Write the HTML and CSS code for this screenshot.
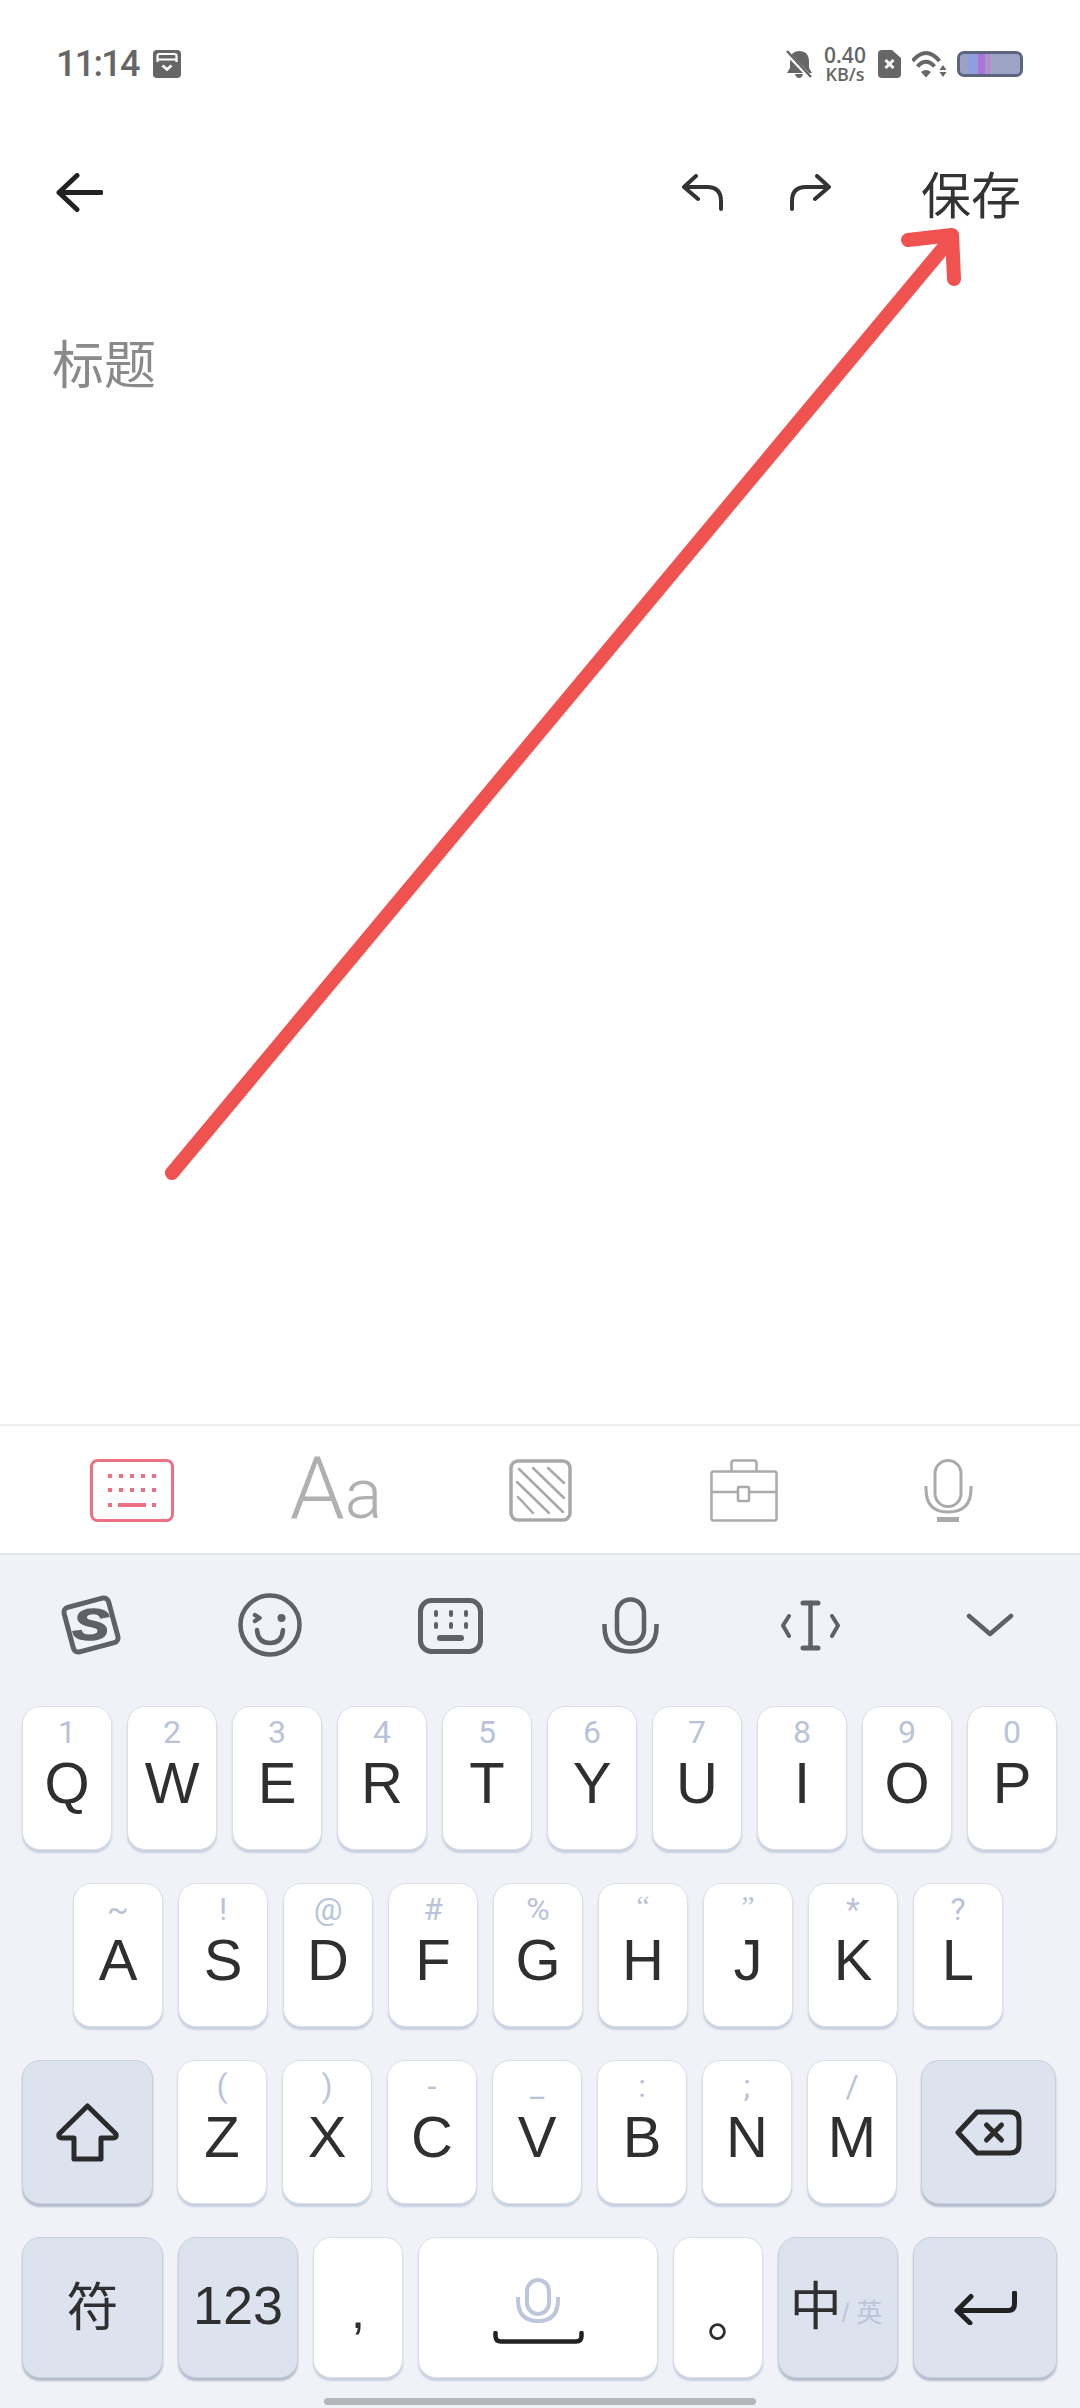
FILE: index.html
```html
<!DOCTYPE html>
<html lang="zh-CN">
  <head>
    <meta charset="UTF-8" />
    <meta name="viewport" content="width=device-width, initial-scale=1.0" />
    <title>新建笔记</title>
    <link rel="stylesheet" href="styles.css">
  </head>
  <body>
    <div class="phone">
      <div class="status">
        <span class="time">11:14</span>
        <svg class="ic-cal" viewBox="0 0 28 28"><rect width="28" height="28" rx="4" fill="#666"/><path d="M4.500 12V6Q4.500 4 6.500 4H21.500Q23.500 4 23.500 6V12M4.500 9.500H23.500" fill="none" stroke="#fff" stroke-width="2.200"/><path d="M9.500 15.500L14 19.500 18.500 15.500" fill="none" stroke="#fff" stroke-width="2.800"/></svg>
        <div class="status-right">
          <svg class="ic-bell" viewBox="0 0 26 28"><path d="M13 1Q23 1 23 12V18L26 23H1L4 18V12Q4 1 13 1Z" fill="#666"/><path d="M9 24H17Q16 28 13 28 10 28 9 24Z" fill="#666"/><path d="M0 2L24 27" stroke="#fff" stroke-width="4.500"/><path d="M1 1L25 27" stroke="#666" stroke-width="2.500"/></svg>
          <div class="speed"><span class="speed-num">0.40</span><span class="speed-unit">KB/s</span></div>
          <svg class="ic-sim" viewBox="0 0 23 28"><path d="M4 0H14L23 8V24Q23 28 19 28H4Q0 28 0 24V4Q0 0 4 0Z" fill="#666"/><path d="M7.500 10L15.500 18M15.500 10L7.500 18" stroke="#fff" stroke-width="3"/></svg>
          <svg class="ic-wifi" viewBox="0 0 35 27"><g fill="none" stroke="#666" stroke-width="4"><path d="M0.500 10Q14 -6 27.500 10"/><path d="M5.500 15.500Q14 6 22.500 15.500"/></g><path d="M9 21Q14 17 19 21L14 26.500Z" fill="#666"/><path d="M31 14L34.500 19H27.500ZM27.500 21H34.500L31 26Z" fill="#666"/></svg>
          <div class="battery"><span class="bat-stripe s1"></span><span class="bat-stripe s2"></span><span class="bat-stripe s3"></span></div>
        </div>
      </div>

      <div class="nav">
        <svg class="ic-back" viewBox="0 0 47 39"><path d="M3 19.500H45M21 2.500L3 19.500 21 36.500" fill="none" stroke="#222" stroke-width="5" stroke-linecap="round" stroke-linejoin="round"/></svg>
        <div class="nav-right">
          <svg class="ic-undo" viewBox="0 0 41 37"><path d="M14 2L2 13 16 25M2 13H25Q39 13 39 27V35" fill="none" stroke="#333" stroke-width="4" stroke-linecap="round" stroke-linejoin="round"/></svg>
          <svg class="ic-undo ic-redo" viewBox="0 0 41 37"><path d="M14 2L2 13 16 25M2 13H25Q39 13 39 27V35" fill="none" stroke="#333" stroke-width="4" stroke-linecap="round" stroke-linejoin="round"/></svg>
          <span class="save">保存</span>
        </div>
      </div>

      <div class="editor">
        <p class="title">标题</p>
      </div>

      <div class="tools">
        <svg class="tool" width="84" height="63" viewBox="0 0 84 63"><rect x="1.500" y="1.500" width="81" height="60" rx="6" fill="none" stroke="#ee7080" stroke-width="3"/><g fill="#ee7080"><rect x="18" y="15" width="4" height="4"/><rect x="29" y="15" width="4" height="4"/><rect x="40" y="15" width="4" height="4"/><rect x="51" y="15" width="4" height="4"/><rect x="62" y="15" width="4" height="4"/><rect x="18" y="29" width="4" height="4"/><rect x="29" y="29" width="4" height="4"/><rect x="40" y="29" width="4" height="4"/><rect x="51" y="29" width="4" height="4"/><rect x="62" y="29" width="4" height="4"/><rect x="18" y="44" width="4" height="4"/><rect x="28" y="44" width="28" height="4"/><rect x="62" y="44" width="4" height="4"/></g></svg>
        <span class="tool tool-aa">A<span class="tool-aa-small">a</span></span>
        <svg class="tool" width="63" height="63" viewBox="0 0 63 63"><path d="M24 9L55 39M10 10L54 53M8 23L40 54M9 38L24 54M39 9L55 24" fill="none" stroke="#a8a8a8" stroke-width="2.500" stroke-linecap="round"/><rect x="2" y="2" width="59" height="59" rx="7" fill="none" stroke="#a8a8a8" stroke-width="3.500"/></svg>
        <svg class="tool" width="68" height="63" viewBox="0 0 68 63"><g fill="none" stroke="#aaa" stroke-width="2.500"><rect x="1.500" y="12.500" width="65" height="49" rx="2"/><path d="M21.500 12V4Q21.500 1.500 24 1.500H44Q46.500 1.500 46.500 4V12M1.500 33H28M39 33H66.500"/><rect x="28" y="28" width="11" height="14" rx="1"/></g></svg>
        <svg class="tool" width="49" height="63" viewBox="0 0 49 63"><g fill="none" stroke="#aaa" stroke-width="3"><rect x="11" y="1.500" width="26" height="46" rx="13"/><path d="M2 27V30Q2 53 24 53 47 53 47 30V27"/></g><rect x="13" y="58" width="22" height="5" fill="#aaa"/></svg>
      </div>

      <div class="keyboard">
        <div class="kb-icons">
          <svg width="67" height="64" viewBox="0 0 67 64"><g transform="rotate(-15 34 32)"><rect x="11" y="9" width="46" height="46" rx="5" fill="none" stroke="#5f6166" stroke-width="5"/></g><text x="27" y="47" text-anchor="middle" transform="scale(1.25 1)" class="logo-s">S</text></svg>
          <svg width="64" height="64" viewBox="0 0 64 64"><g fill="none" stroke="#5f6166" stroke-width="4.500" stroke-linecap="round" stroke-linejoin="round"><circle cx="32" cy="32" r="29.500"/><path d="M17 22L21.500 25 17 28"/><path d="M19 37Q20 50 32 50 44 50 45 37"/></g><circle cx="43.500" cy="25" r="4" fill="#5f6166"/></svg>
          <svg width="65" height="57" viewBox="0 0 65 57"><rect x="2.500" y="3.500" width="60" height="51" rx="11" fill="none" stroke="#5f6166" stroke-width="5"/><g fill="#5f6166"><rect x="16" y="13" width="4" height="7" rx="2"/><rect x="31" y="13" width="4" height="7" rx="2"/><rect x="46" y="13" width="4" height="7" rx="2"/><rect x="16" y="25" width="4" height="7" rx="2"/><rect x="31" y="25" width="4" height="7" rx="2"/><rect x="46" y="25" width="4" height="7" rx="2"/><rect x="19" y="38" width="27" height="6" rx="3"/></g></svg>
          <svg width="57" height="57" viewBox="0 0 57 57"><g fill="none" stroke="#5f6166" stroke-width="4.500"><rect x="15" y="2.500" width="27" height="44" rx="13.500"/><path d="M2.500 27V30Q2.500 54.500 28.500 54.500 54.500 54.500 54.500 30V27"/></g></svg>
          <svg width="59" height="51" viewBox="0 0 59 51"><g fill="none" stroke="#5f6166" stroke-width="4" stroke-linecap="round" stroke-linejoin="round"><path d="M8 16L2 25.500 8 36M51 16L57 25.500 51 36"/><path d="M29.500 3V48" stroke-width="4.500"/><path d="M22 3H37M22 48H37" stroke-width="5"/></g></svg>
          <svg width="48" height="24" viewBox="0 0 48 24"><path d="M3 3L24 21 45 3" fill="none" stroke="#5f6166" stroke-width="4.500" stroke-linecap="round" stroke-linejoin="round"/></svg>
        </div>

        <div class="kb-rows">
          <div class="row">
            <div class="key"><span class="hint">1</span><span class="cap">Q</span></div>
            <div class="key"><span class="hint">2</span><span class="cap">W</span></div>
            <div class="key"><span class="hint">3</span><span class="cap">E</span></div>
            <div class="key"><span class="hint">4</span><span class="cap">R</span></div>
            <div class="key"><span class="hint">5</span><span class="cap">T</span></div>
            <div class="key"><span class="hint">6</span><span class="cap">Y</span></div>
            <div class="key"><span class="hint">7</span><span class="cap">U</span></div>
            <div class="key"><span class="hint">8</span><span class="cap">I</span></div>
            <div class="key"><span class="hint">9</span><span class="cap">O</span></div>
            <div class="key"><span class="hint">0</span><span class="cap">P</span></div>
          </div>
          <div class="row row-home">
            <div class="key"><span class="hint">~</span><span class="cap">A</span></div>
            <div class="key"><span class="hint">!</span><span class="cap">S</span></div>
            <div class="key"><span class="hint">@</span><span class="cap">D</span></div>
            <div class="key"><span class="hint">#</span><span class="cap">F</span></div>
            <div class="key"><span class="hint">%</span><span class="cap">G</span></div>
            <div class="key"><span class="hint hint-quote">“</span><span class="cap">H</span></div>
            <div class="key"><span class="hint hint-quote">”</span><span class="cap">J</span></div>
            <div class="key"><span class="hint">*</span><span class="cap">K</span></div>
            <div class="key"><span class="hint">?</span><span class="cap">L</span></div>
          </div>
          <div class="row row-shift">
            <div class="key key-fn key-shift">
              <svg width="63" height="59" viewBox="0 0 63 59"><path d="M31.500 3L60 31Q61 35 57 35H45V56H18V35H6Q2 35 3 31Z" fill="none" stroke="#2b2b2b" stroke-width="5" stroke-linejoin="round"/></svg>
            </div>
            <div class="row-group">
              <div class="key"><span class="hint">(</span><span class="cap">Z</span></div>
              <div class="key"><span class="hint">)</span><span class="cap">X</span></div>
              <div class="key"><span class="hint">-</span><span class="cap">C</span></div>
              <div class="key"><span class="hint">_</span><span class="cap">V</span></div>
              <div class="key"><span class="hint">:</span><span class="cap">B</span></div>
              <div class="key"><span class="hint">;</span><span class="cap">N</span></div>
              <div class="key"><span class="hint">/</span><span class="cap">M</span></div>
            </div>
            <div class="key key-fn key-del">
              <svg width="67" height="47" viewBox="0 0 67 47"><path d="M22 3H55Q64 3 64 12V35Q64 44 55 44H22L3 23.500Z" fill="none" stroke="#2b2b2b" stroke-width="5" stroke-linejoin="round"/><path d="M31.500 16L46.500 31M46.500 16L31.500 31" stroke="#2b2b2b" stroke-width="5" stroke-linecap="round"/></svg>
            </div>
          </div>
          <div class="row row-bottom">
            <div class="key key-fn key-sym">符</div>
            <div class="key key-fn key-num">123</div>
            <div class="key key-punct">,</div>
            <div class="key key-space">
              <svg width="44" height="45" viewBox="0 0 44 45"><g fill="none" stroke="#bcc7dc" stroke-width="4"><rect x="11" y="2" width="22" height="34" rx="11"/><path d="M2 19V22Q2 43 22 43 42 43 42 22V19"/></g></svg>
              <svg class="space-bar" width="91" height="13" viewBox="0 0 91 13"><path d="M2.500 2V5Q2.500 10.500 8 10.500H83Q88.500 10.500 88.500 5V2" fill="none" stroke="#222" stroke-width="4.500" stroke-linecap="round"/></svg>
            </div>
            <div class="key key-punct key-period"><span class="period">。</span></div>
            <div class="key key-fn key-lang"><span class="lang-zh">中</span><span class="lang-en">/ 英</span></div>
            <div class="key key-fn key-enter">
              <svg width="63" height="34" viewBox="0 0 63 34"><path d="M60.500 2V13Q60.500 19.500 54 19.500H4M17 5.500L3 19.500 16 32" fill="none" stroke="#222" stroke-width="5" stroke-linecap="round" stroke-linejoin="round"/></svg>
            </div>
          </div>
        </div>
        <div class="home-bar"></div>
      </div>

      <svg class="pointer" width="1080" height="2408" viewBox="0 0 1080 2408"><path d="M172 1173L945 246M908 240L952 235 954 279" fill="none" stroke="#f0524f" stroke-width="14" stroke-linecap="round" stroke-linejoin="round"/></svg>
    </div>
  </body>
</html>
```
FILE: styles.css
```css
* {
  box-sizing: border-box;
}

body {
  margin: 0;
  background: #fff;
  font-family: "Liberation Sans", "Noto Sans CJK SC", sans-serif;
}

.phone {
  position: relative;
  width: 1080px;
  height: 2408px;
  display: flex;
  flex-direction: column;
  overflow: hidden;
}

/* status bar */
.status {
  height: 128px;
  padding: 0 57px 0 56px;
  display: flex;
  align-items: center;
}

.time {
  width: 97px;
  font-family: Roboto, sans-serif;
  font-weight: 500;
  font-size: 36px;
  letter-spacing: -1.700px;
  color: #666;
}

.ic-cal {
  width: 28px;
  height: 28px;
}

.status-right {
  margin-left: auto;
  display: flex;
  align-items: center;
  gap: 11px;
}

.ic-bell {
  width: 26px;
  height: 28px;
}

.speed {
  width: 44px;
  display: flex;
  flex-direction: column;
  align-items: center;
  font-family: "Open Sans", sans-serif;
  font-weight: 600;
  color: #666;
}

.speed-num {
  font-size: 21px;
  line-height: 20px;
}

.speed-unit {
  font-size: 18px;
  line-height: 18px;
}

.ic-sim {
  width: 23px;
  height: 28px;
}

.ic-wifi {
  width: 35px;
  height: 27px;
}

.battery {
  width: 66px;
  height: 26px;
  margin-left: -1px;
  padding-left: 8px;
  border: 3px solid #5c6480;
  border-radius: 7px;
  background: #9ca4c6;
  display: flex;
}

.bat-stripe {
  width: 9px;
  height: 100%;
}

.s1 {
  background: #8f9ee0;
  margin-right: 1px;
}

.s2 {
  background: #a875e0;
  width: 7px;
  margin-right: 2px;
}

.s3 {
  background: #c285c8;
  width: 3px;
}

/* title bar */
.nav {
  height: 128px;
  padding: 0 59px 0 56px;
  display: flex;
  align-items: center;
}

.ic-back {
  width: 47px;
  height: 39px;
}

.nav-right {
  margin-left: auto;
  display: flex;
  align-items: center;
}

.ic-undo {
  width: 41px;
  height: 37px;
  margin-right: 67px;
}

.ic-redo {
  transform: scaleX(-1);
  margin-right: 90px;
}

.save {
  font-size: 50px;
  color: #333;
}

/* note body */
.editor {
  flex: 1;
  padding: 74px 0 0 52px;
}

.title {
  margin: 0;
  font-size: 52px;
  line-height: 72px;
  color: #8a8a8a;
}

/* note toolbar */
.tools {
  height: 131px;
  padding: 2px 30px 0;
  display: grid;
  grid-template-columns: repeat(5, 204px);
  align-items: center;
  justify-items: center;
  border-top: 2px solid #ededed;
  border-bottom: 2px solid #e2e3e6;
}

.tool-aa {
  font-family: Roboto, sans-serif;
  font-weight: 300;
  font-size: 88px;
  line-height: 64px;
  color: #b0b0b0;
}

.tool-aa-small {
  font-size: 70px;
}

/* keyboard */
.keyboard {
  padding-bottom: 3px;
  background: #f0f2f7;
}

.kb-icons {
  height: 151px;
  display: grid;
  grid-template-columns: repeat(6, 180px);
  align-items: center;
  justify-items: center;
}

.kb-icons svg {
  margin-bottom: 11px;
}

.logo-s {
  font-family: "Liberation Sans", sans-serif;
  font-weight: 700;
  font-style: italic;
  font-size: 44px;
  fill: #5f6166;
  stroke: #5f6166;
  stroke-width: 1.500px;
}

.kb-rows {
  display: flex;
  flex-direction: column;
  gap: 33px;
  padding-left: 22px;
}

.row {
  display: flex;
  gap: 15px;
}

.row-home {
  padding-left: 51px;
}

.row-group {
  display: flex;
  gap: 15px;
  margin: 0 9px;
}

.key {
  width: 90px;
  height: 144px;
  padding-top: 7px;
  background: #fff;
  border: 1px solid #d9dee9;
  border-radius: 18px;
  box-shadow: 0 3px 2px #c8d0e0;
  display: flex;
  flex-direction: column;
  align-items: center;
  color: #2f2f2f;
}

.hint {
  height: 40px;
  font-family: Roboto, sans-serif;
  font-size: 32px;
  line-height: 36px;
  color: #b9c3d8;
}

.hint-quote {
  font-family: "Liberation Serif", serif;
  font-size: 30px;
  line-height: 30px;
}

.cap {
  font-size: 58px;
  line-height: 58px;
}

.key-fn {
  padding: 0;
  background: #dde2ef;
  border-color: #c9cfde;
  box-shadow: 0 3px 2px #b4bccd;
  justify-content: center;
}

.key-shift {
  width: 131px;
}

.key-del {
  width: 135px;
}

.row-bottom .key {
  height: 141px;
}

.key-sym {
  width: 141px;
  padding-bottom: 8px;
  font-size: 52px;
}

.key-num {
  width: 120px;
  padding-bottom: 6px;
  font-size: 54px;
}

.key-punct {
  padding-top: 42px;
  font-size: 52px;
}

.key-period {
  padding-top: 54px;
}

.period {
  font-size: 54px;
  line-height: 52px;
  margin-left: 32px;
}

.key-space {
  width: 240px;
  padding-top: 40px;
}

.space-bar {
  margin-top: 8px;
}

.key-lang {
  width: 120px;
  flex-direction: row;
  align-items: center;
  padding: 0 4px 10px 0;
}

.lang-zh {
  font-size: 52px;
}

.lang-en {
  font-size: 26px;
  color: #bcc5da;
  margin-top: 16px;
  white-space: nowrap;
}

.key-enter {
  width: 144px;
}

.home-bar {
  width: 432px;
  height: 7px;
  margin: 20px auto 0;
  border-radius: 4px;
  background: #b6b7bb;
}

/* annotation drawn on top of the shot */
.pointer {
  position: absolute;
  left: 0;
  top: 0;
  pointer-events: none;
}
```
